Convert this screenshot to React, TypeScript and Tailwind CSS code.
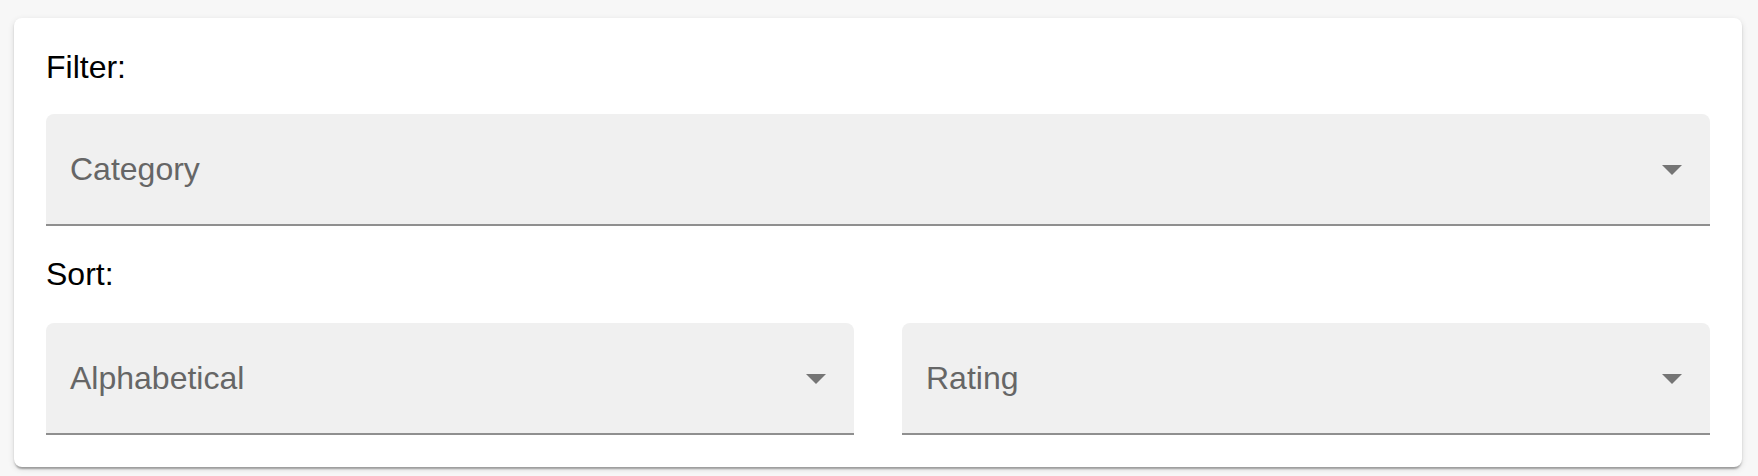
import React from "react";

function Caret() {
  return (
    <svg viewBox="0 0 24 24" className="w-12 h-12 absolute right-[14px] top-1/2 -translate-y-1/2 fill-[#757575]">
      <path d="M7 10l5 5 5-5z" />
    </svg>
  );
}

function FilledSelect({ label }: { label: string }) {
  return (
    <div className="relative flex items-center h-[112px] w-full rounded-t-[8px] bg-[#f0f0f0] border-b-2 border-[#8f8f8f] pl-6">
      <span className="text-[32px] leading-[46px] text-[#666666]">{label}</span>
      <Caret />
    </div>
  );
}

export default function App() {
  return (
    <div
      className="min-h-screen bg-[#f7f7f7] pt-[18px] pl-[14px] pr-4"
      style={{ fontFamily: '"Liberation Sans", Arial, sans-serif' }}
    >
      <div className="bg-white rounded-[8px] shadow-[0_4px_2px_-2px_rgba(0,0,0,0.2),0_2px_2px_0_rgba(0,0,0,0.14),0_2px_6px_0_rgba(0,0,0,0.12)] px-8 pt-[31px] pb-8">
        <div className="text-[32px] leading-[36px] text-black">Filter:</div>
        <div className="mt-[29px]">
          <FilledSelect label="Category" />
        </div>
        <div className="mt-[30px] text-[32px] leading-[36px] text-black">Sort:</div>
        <div className="mt-[31px] grid grid-cols-2 gap-12">
          <FilledSelect label="Alphabetical" />
          <FilledSelect label="Rating" />
        </div>
      </div>
    </div>
  );
}
